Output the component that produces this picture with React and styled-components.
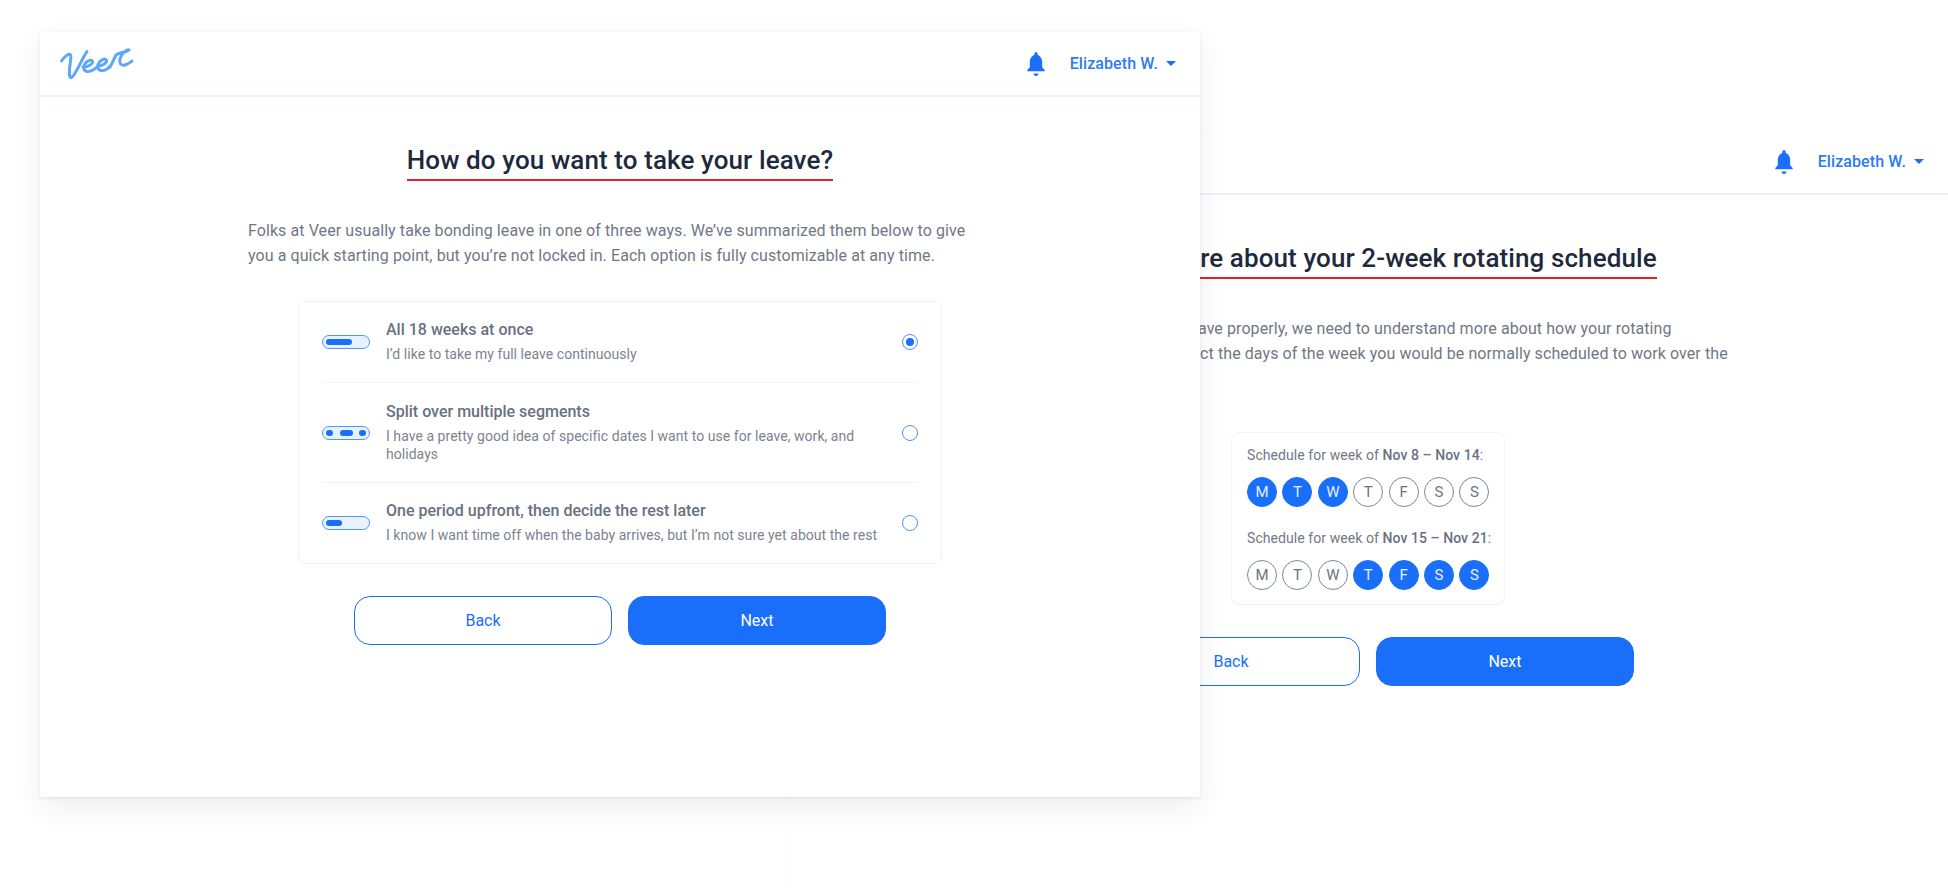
import React from "react";
import styled, { createGlobalStyle } from "styled-components";

const GlobalStyle = createGlobalStyle`
  html, body {
    margin: 0;
    padding: 0;
    background: #fff;
    font-family: Roboto, "Liberation Sans", sans-serif;
  }
  #root {
    position: relative;
    width: 1948px;
    height: 896px;
    overflow: hidden;
  }
`;

const Window = styled.section`
  position: absolute;
  left: ${(props) => props.$left}px;
  top: ${(props) => props.$top}px;
  z-index: ${(props) => props.$z};
  width: 1160px;
  height: 765px;
  background: #fff;
  box-shadow: ${(props) =>
    props.$front
      ? "0 1px 3px rgba(0,0,0,.08), 0 10px 30px rgba(0,0,0,.07)"
      : "0 0 2px rgba(0,0,0,.03)"};
`;

const Header = styled.header`
  display: flex;
  align-items: center;
  height: 63px;
  padding: 0 24px;
  border-bottom: 2px solid #e8f2fd;
`;

const LogoSlot = styled.div`
  display: flex;
  flex: 1;
  margin-left: -9px;
`;

const UserName = styled.span`
  margin-left: 21px;
  color: #2b7bf6;
  font-size: 16px;
  font-weight: 500;
  letter-spacing: 0.1px;
`;

const Caret = styled.span`
  width: 0;
  height: 0;
  margin-left: 8px;
  border-top: 5px solid #1a6ffa;
  border-left: 5px solid transparent;
  border-right: 5px solid transparent;
`;

const Body = styled.div`
  display: flex;
  flex-direction: column;
  align-items: center;
  padding-top: 47px;
`;

const Title = styled.h1`
  margin: 0;
  padding-bottom: 3px;
  border-bottom: 2px solid #e8202a;
  color: #1e2a3c;
  font-size: 26px;
  font-weight: 500;
  letter-spacing: 0.1px;
  line-height: 32px;
`;

const Intro = styled.p`
  box-sizing: border-box;
  width: 744px;
  margin: 37px 0 0;
  padding-right: 10px;
  color: #6f7885;
  font-size: 16px;
  letter-spacing: 0.08px;
  line-height: 25px;
`;

const Card = styled.div`
  box-sizing: border-box;
  width: ${(props) => props.$width}px;
  margin-top: ${(props) => props.$mt}px;
  padding: ${(props) => props.$padding};
  border: 1px solid #f2f3f5;
  border-radius: 8px;
`;

const Row = styled.label`
  display: flex;
  align-items: center;
  height: ${(props) => props.$height}px;
  border-top: ${(props) => (props.$first ? "none" : "1px solid #edf4fc")};
  box-sizing: border-box;
`;

const RowText = styled.div`
  flex: 1;
  margin-left: 16px;
  padding: 0 24px 2px 0;
`;

const RowTitle = styled.div`
  color: #687180;
  font-size: 16px;
  font-weight: 500;
  line-height: 22px;
`;

const RowSub = styled.div`
  margin-top: 4px;
  color: #7b8390;
  font-size: 14px;
  letter-spacing: 0.045px;
  line-height: 18px;
`;

const Track = styled.span`
  display: flex;
  align-items: center;
  gap: ${(props) => (props.$split ? "6.5px" : "0")};
  flex: none;
  box-sizing: border-box;
  width: 48px;
  height: 14px;
  padding: 0 3px;
  border: 1.5px solid #4f96fb;
  border-radius: 7px;
  background: #e8f2fd;
`;

const Segment = styled.span`
  height: 6px;
  width: ${(props) => props.$width}px;
  border-radius: 3px;
  background: #1a6ffa;
`;

const Radio = styled.span`
  display: flex;
  align-items: center;
  justify-content: center;
  flex: none;
  box-sizing: border-box;
  width: 16px;
  height: 16px;
  border: 1.5px solid #4f8ffb;
  border-radius: 50%;

  &::after {
    content: "";
    display: ${(props) => (props.$checked ? "block" : "none")};
    width: 8px;
    height: 8px;
    border-radius: 50%;
    background: #1a6ffa;
  }
`;

const Buttons = styled.div`
  display: flex;
  gap: 16px;
  margin-top: ${(props) => props.$mt}px;
`;

const Button = styled.button`
  width: 258px;
  height: 49px;
  border: 1px solid #1a6ffa;
  border-radius: 16px;
  background: ${(props) => (props.$primary ? "#1a6ffa" : "#fff")};
  color: ${(props) => (props.$primary ? "#fff" : "#1a6ffa")};
  font-family: inherit;
  font-size: 16px;
`;

const WeekLabel = styled.div`
  margin-top: ${(props) => (props.$first ? "0" : "22px")};
  color: #6f7885;
  font-size: 14px;
  letter-spacing: 0.07px;
  line-height: 18px;
  white-space: nowrap;

  b {
    font-weight: 500;
    color: #687180;
  }
`;

const Days = styled.div`
  display: flex;
  gap: 5.4px;
  margin-top: 13px;
`;

const Day = styled.span`
  display: flex;
  align-items: center;
  justify-content: center;
  box-sizing: border-box;
  width: 30px;
  height: 30px;
  border: 1px solid ${(props) => (props.$on ? "#1a6ffa" : "#7f8792")};
  border-radius: 50%;
  background: ${(props) => (props.$on ? "#1a6ffa" : "#fff")};
  color: ${(props) => (props.$on ? "#e6f0ff" : "#6b7480")};
  font-size: 15px;
`;

const Bell = () => (
  <svg width="26" height="26" viewBox="0 0 24 24" fill="#1a6ffa">
    <path d="M12 23c1.300 0 2.300-1 2.300-2.200H9.700C9.700 22 10.700 23 12 23zm8-5.500-2.300-2.500V10c0-3.200-2-5.700-4.200-6.400V2.500a1.500 1.500 0 0 0-3 0v1.100C8.300 4.300 6.300 6.800 6.300 10v5L4 17.500v1.300h16z" />
  </svg>
);

// Veer wordmark, traced as one pen line per letter
const Logo = () => (
  <svg width="84" height="40" viewBox="0 0 84 40" fill="none" stroke="#5aa7fb" strokeWidth="3" strokeLinecap="round" strokeLinejoin="round">
    <path d="M6.500 17C10 12 14 9 15.500 11c1.500 3-2 13-1 20 .5 4 2.500 3 5-1C24 23 27 15 32 7.500" />
    <path d="M28 23c5 0 10-3 9.500-5.500C37 15.500 33 16 30.500 19c-2.500 3-2.500 8 1.500 8.500 4 .5 8-2.500 11-5.500" />
    <path d="M43 22c4 0 9-3 8.500-5.500C51 14 47 15 44.500 18c-2.500 3-2.500 8 1.500 8.500 4 .5 8-2.500 9-4.500" />
    <path d="M55 23c2-3 4-8 6-12 3-3 9-2 13-5-2-1-8 4-9 9-1 5 2 7 5 6 3-1 5-2 7-4" />
  </svg>
);

const UserBar = () => (
  <>
    <Bell />
    <UserName>Elizabeth W.</UserName>
    <Caret />
  </>
);

const options = [
  {
    title: "All 18 weeks at once",
    sub: "I’d like to take my full leave continuously",
    height: 80,
    checked: true,
    segments: [26],
  },
  {
    title: "Split over multiple segments",
    sub: "I have a pretty good idea of specific dates I want to use for leave, work, and holidays",
    height: 100,
    split: true,
    segments: [7, 13, 7],
  },
  {
    title: "One period upfront, then decide the rest later",
    sub: "I know I want time off when the baby arrives, but I’m not sure yet about the rest",
    height: 81,
    segments: [16],
  },
];

const weeks = [
  { label: "Nov 8 – Nov 14", on: [0, 1, 2] },
  { label: "Nov 15 – Nov 21", on: [3, 4, 5, 6] },
];

function App() {
  return (
    <>
      <GlobalStyle />
      <Window $left={788} $top={130} $z={1}>
        <Header>
          <LogoSlot />
          <UserBar />
        </Header>
        <Body>
          <Title>Tell us more about your 2-week rotating schedule</Title>
          <Intro>
            In order to determine your leave properly, we need to understand more about how your rotating
            <br />
            schedule. Below, please select the days of the week you would be normally scheduled to work over the next two weeks.
          </Intro>
          <Card $width={274} $mt={41} $padding="13px 0 14px 15px">
            {weeks.map((week, i) => (
              <div key={week.label}>
                <WeekLabel $first={i === 0}>
                  Schedule for week of <b>{week.label}</b>:
                </WeekLabel>
                <Days>
                  {["M", "T", "W", "T", "F", "S", "S"].map((d, j) => (
                    <Day key={j} $on={week.on.includes(j)}>
                      {d}
                    </Day>
                  ))}
                </Days>
              </div>
            ))}
          </Card>
          <Buttons $mt={32}>
            <Button>Back</Button>
            <Button $primary>Next</Button>
          </Buttons>
        </Body>
      </Window>

      <Window $left={40} $top={32} $z={2} $front>
        <Header>
          <LogoSlot>
            <Logo />
          </LogoSlot>
          <UserBar />
        </Header>
        <Body>
          <Title>How do you want to take your leave?</Title>
          <Intro>
            Folks at Veer usually take bonding leave in one of three ways. We’ve summarized them below to give you a quick starting point, but you’re not locked in. Each option is fully customizable at any time.
          </Intro>
          <Card $width={644} $mt={33} $padding="0 23px">
            {options.map((opt, i) => (
              <Row key={opt.title} $height={opt.height} $first={i === 0}>
                <Track $split={opt.split}>
                  {opt.segments.map((w, j) => (
                    <Segment key={j} $width={w} />
                  ))}
                </Track>
                <RowText>
                  <RowTitle>{opt.title}</RowTitle>
                  <RowSub>{opt.sub}</RowSub>
                </RowText>
                <Radio $checked={opt.checked} />
              </Row>
            ))}
          </Card>
          <Buttons $mt={32}>
            <Button>Back</Button>
            <Button $primary>Next</Button>
          </Buttons>
        </Body>
      </Window>
    </>
  );
}

export default App;
